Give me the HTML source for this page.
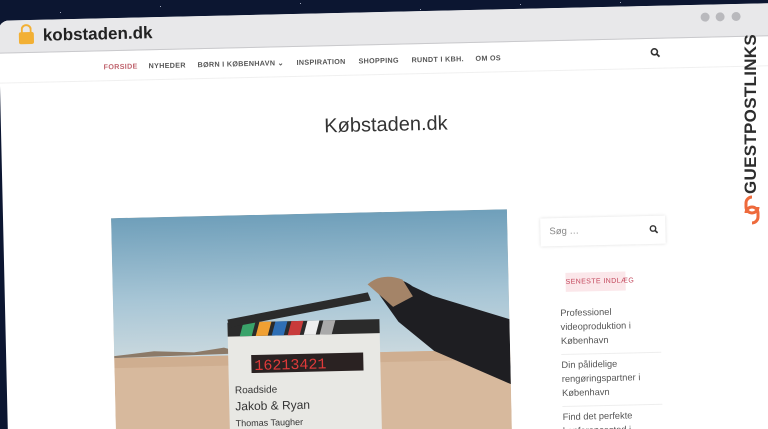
<!DOCTYPE html>
<html><head><meta charset="utf-8"><style>
html,body{margin:0;padding:0;width:768px;height:429px;overflow:hidden;background:#0c1631;font-family:"Liberation Sans",sans-serif}
#root{position:relative;width:768px;height:429px;overflow:hidden}
.star{position:absolute;width:1px;height:1px;background:#cfd6ea;border-radius:50%}
#win{position:absolute;left:3px;top:12px;width:800px;height:560px;background:#fff;border-radius:10px 10px 0 0;transform:rotate(-1.3deg);transform-origin:381px 202px;overflow:hidden}
#bar{position:absolute;left:0;top:0;width:100%;height:32px;background:#e8e8ea;border-bottom:1px solid #c9c9cc}
.dot{position:absolute;top:8px;width:9px;height:9px;border-radius:50%;background:#b9b9bd}
.nav{position:absolute;top:44px;font-size:7.2px;font-weight:bold;color:#555;letter-spacing:.3px;white-space:nowrap}
.post{position:absolute;left:555px;font-size:9.3px;color:#555;line-height:14px;width:100px}
</style></head><body><div id="root">
<div class="star" style="left:160px;top:6px"></div><div class="star" style="left:300px;top:3px"></div><div class="star" style="left:420px;top:9px"></div><div class="star" style="left:520px;top:4px"></div><div class="star" style="left:60px;top:12px"></div><div class="star" style="left:620px;top:2px"></div>
<div id="win">
 <div id="bar">
  <div style="position:absolute;left:20px;top:12px;width:15px;height:12px;background:#f2b035;border-radius:2px"></div>
  <div style="position:absolute;left:22px;top:4px;width:7px;height:9px;border:2px solid #f2b035;border-bottom:none;border-radius:6px 6px 0 0"></div>
  <div style="position:absolute;left:44px;top:6px;font-size:17px;font-weight:bold;color:#222">kobstaden.dk</div>
  <div class="dot" style="left:702px"></div><div class="dot" style="left:717px"></div><div class="dot" style="left:733px"></div>
 </div>
 <div class="nav" style="left:104px;color:#c0646e">FORSIDE</div>
 <div class="nav" style="left:149px">NYHEDER</div>
 <div class="nav" style="left:198px">BØRN I KØBENHAVN ⌄</div>
 <div class="nav" style="left:297px">INSPIRATION</div>
 <div class="nav" style="left:359px">SHOPPING</div>
 <div class="nav" style="left:412px">RUNDT I KBH.</div>
 <div class="nav" style="left:476px">OM OS</div>
 <svg style="position:absolute;left:651px;top:42px" width="10" height="10" viewBox="0 0 10 10"><circle cx="4" cy="4" r="3" fill="none" stroke="#333" stroke-width="1.6"/><path d="M6 6l3 3" stroke="#333" stroke-width="1.8"/></svg>
 <div style="position:absolute;left:0;top:62px;width:100%;height:1px;background:#f0f0f0"></div>
 <div style="position:absolute;left:0;width:770px;text-align:center;top:102px;font-size:20px;color:#333">Købstaden.dk</div>
 <svg style="position:absolute;left:108px;top:200px" width="396" height="240" viewBox="0 0 396 240">
  <defs><linearGradient id="sk" x1="0" y1="0" x2="0" y2="1"><stop offset="0" stop-color="#6f9fba"/><stop offset=".6" stop-color="#a8c6d6"/><stop offset="1" stop-color="#c9d8de"/></linearGradient></defs>
  <rect width="396" height="240" fill="#d7b99d"/>
  <rect width="396" height="140" fill="url(#sk)"/>
  <path d="M0 138 L40 134 L80 136 L110 132 L130 138 L0 140Z" fill="#8c7a68"/>
  <path d="M0 140 H396 V150 H0Z" fill="#cfae90"/>
  <rect x="114" y="113" width="152" height="140" fill="#e8e8e4"/>
  <rect x="114" y="107" width="152" height="14" fill="#2b2b2b"/>
  <path d="M130 107h12l-4 14h-12z" fill="#3aa36a"/><path d="M146 107h12l-4 14h-12z" fill="#f0a032"/><path d="M162 107h12l-4 14h-12z" fill="#2f6fb5"/><path d="M178 107h12l-4 14h-12z" fill="#c83b3b"/><path d="M194 107h12l-4 14h-12z" fill="#eee"/><path d="M210 107h12l-4 14h-12z" fill="#aaa"/>
  <path d="M114 104 L255 80 L258 88 L116 112Z" fill="#2b2b2b"/>
  <rect x="137" y="140" width="112" height="18" fill="#2a2222"/>
  <text x="140" y="155" font-family="Liberation Mono" font-size="15" fill="#e03a3a">16213421</text>
  <text x="120" y="178" font-size="10" fill="#333">Roadside</text>
  <text x="120" y="195" font-size="12" fill="#333">Jakob &amp; Ryan</text>
  <text x="120" y="211" font-size="9" fill="#333">Thomas Taugher</text>
  <path d="M258 70 Q280 60 300 75 L320 85 L396 110 V175 L320 140 L285 110 Z" fill="#1e1e22"/>
  <path d="M255 72 Q270 60 290 68 L300 85 L280 95Z" fill="#a48468"/>
 </svg>
 <div style="position:absolute;left:537px;top:210px;width:125px;height:28px;background:#fff;box-shadow:0 0 3px #ddd"></div>
 <div style="position:absolute;left:546px;top:218px;font-size:9.5px;color:#888">Søg …</div>
 <svg style="position:absolute;left:646px;top:219px" width="9" height="9" viewBox="0 0 10 10"><circle cx="4" cy="4" r="3" fill="none" stroke="#333" stroke-width="1.6"/><path d="M6 6l3 3" stroke="#333" stroke-width="1.8"/></svg>
 <div style="position:absolute;left:561px;top:265px;width:60px;height:19px;background:#fbe7ea;color:#c2455a;font-size:7px;letter-spacing:.4px;text-align:center;line-height:19px;white-space:nowrap">SENESTE INDLÆG</div>
 <div class="post" style="top:298px">Professionel videoproduktion i København</div>
 <div style="position:absolute;left:555px;top:346px;width:100px;height:1px;background:#eee"></div>
 <div class="post" style="top:350px">Din pålidelige rengøringspartner i København</div>
 <div style="position:absolute;left:555px;top:398px;width:100px;height:1px;background:#eee"></div>
 <div class="post" style="top:402px">Find det perfekte konferencested i</div>
</div>
<div style="position:absolute;left:751px;top:114px;transform:translate(-50%,-50%) rotate(-90deg);font-size:17px;font-weight:bold;color:#2d2d2d;white-space:nowrap;letter-spacing:.3px">GUESTPOSTLINKS</div>
<svg style="position:absolute;left:742px;top:194px" width="20" height="32" viewBox="0 0 20 32"><path d="M10 3 a6 6 0 0 0 -6 6 v4 a6 6 0 0 0 12 0" fill="none" stroke="#ee6a3c" stroke-width="3"/><path d="M10 29 a6 6 0 0 0 6 -6 v-4 a6 6 0 0 0 -12 0" fill="none" stroke="#ee6a3c" stroke-width="3"/></svg>
</div></body></html>
